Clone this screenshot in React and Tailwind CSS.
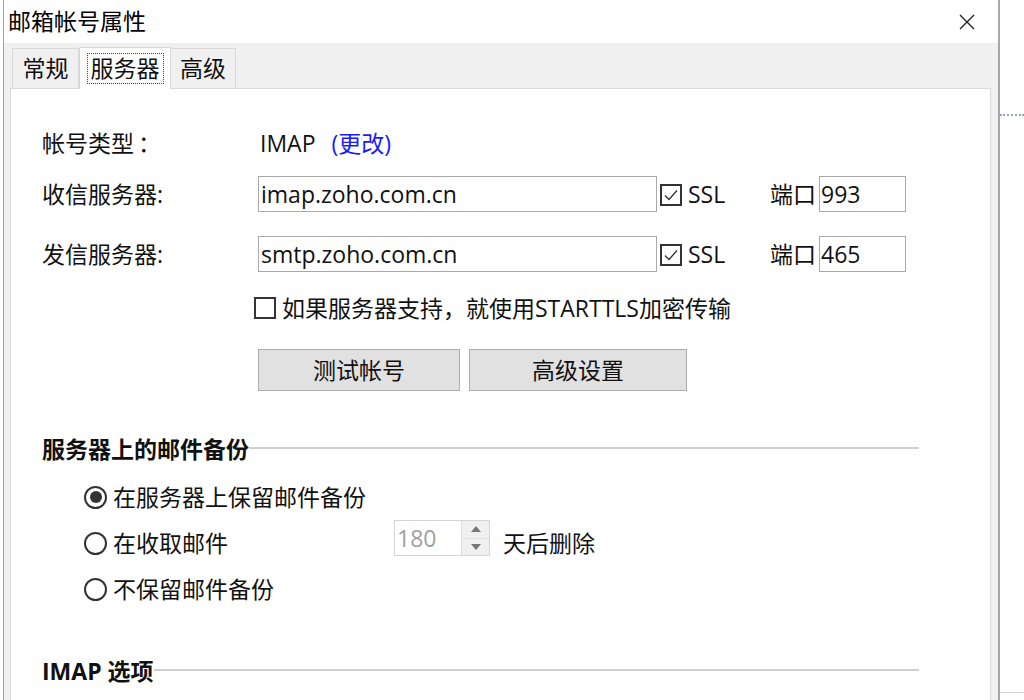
import React from 'react';

const font = { fontFamily: '"Open Sans", "Noto Sans CJK SC", sans-serif' };

function CheckBox({ checked }) {
  return (
    <span className="w-[22px] h-[22px] border-2 border-[#333] bg-white flex items-center justify-center shrink-0">
      {checked && (
        <svg width="16" height="16" viewBox="0 0 16 16">
          <path d="M2 8.5 L6 12.5 L14 3.5" fill="none" stroke="#333" strokeWidth="1.3" />
        </svg>
      )}
    </span>
  );
}

function Radio({ checked }) {
  return (
    <span className="w-[23px] h-[23px] rounded-full border-2 border-[#333] bg-white flex items-center justify-center shrink-0">
      {checked && <span className="w-[12px] h-[12px] rounded-full bg-[#333]" />}
    </span>
  );
}

function ServerRow({ label, host, port }) {
  return (
    <div className="flex items-center h-[36px]">
      <div className="w-[216px] text-[23px] text-[#111]">{label}</div>
      <div className="w-[399px] h-[36px] border border-[#a9a9a9] flex items-center pl-[2px] text-[23px] text-[#111]">{host}</div>
      <div className="ml-[3px] mt-[2px]"><CheckBox checked /></div>
      <span className="ml-[6px] w-[82px] text-[23px] text-[#111]">SSL</span>
      <span className="w-[49px] text-[23px] text-[#111]">端口</span>
      <div className="w-[87px] h-[36px] border border-[#a9a9a9] flex items-center pl-[1px] text-[23px] text-[#111]">{port}</div>
    </div>
  );
}

function SectionTitle({ children }) {
  return (
    <div className="flex items-center h-[28px] pr-[71px]">
      <span className="text-[23px] font-bold text-[#111] leading-none">{children}</span>
      <span className="flex-1 h-[2px] bg-[#d0d0d0] mt-[-3px]" />
    </div>
  );
}

export default function App() {
  return (
    <div className="w-[1024px] h-[700px] bg-white flex overflow-hidden" style={font}>
      <div className="ml-[3px] w-[997px] h-full border-l border-[#a0a0a0] border-r-2 border-r-[#a8a8a8] flex flex-col">
        {/* title bar */}
        <div className="h-[43px] bg-white flex items-center justify-between pl-[4px] pr-[22px] shrink-0">
          <span className="text-[23px] text-[#000]">邮箱帐号属性</span>
          <svg width="18" height="18" viewBox="0 0 18 18">
            <path d="M2 2 L16 16 M16 2 L2 16" stroke="#222" strokeWidth="1.4" />
          </svg>
        </div>
        {/* tab area */}
        <div className="flex-1 bg-[#f0f0f0] flex flex-col pl-[6px] pr-[7px]">
          <div className="flex items-end h-[45px] pl-[2px] relative z-10">
            <div className="w-[67px] h-[40px] border border-[#d9d9d9] border-b-0 bg-[#f0f0f0] flex items-center justify-center text-[23px] text-[#111]">常规</div>
            <div className="w-[92px] h-[42px] border border-[#d9d9d9] border-b-0 bg-white flex items-center justify-center mb-[-1px]">
              <span className="border border-dotted border-[#444] px-[3px] h-[31px] flex items-center text-[23px] text-[#111]">服务器</span>
            </div>
            <div className="w-[65px] h-[40px] border border-[#d9d9d9] border-b-0 border-l-0 bg-[#f0f0f0] flex items-center justify-center text-[23px] text-[#111]">高级</div>
          </div>
          <div className="flex-1 bg-white border border-[#d9d9d9] border-b-0 pl-[31px] flex flex-col">
            <div className="flex items-center h-[36px] mt-[36px]">
              <div className="w-[218px] text-[23px] text-[#111]">帐号类型<span className="ml-[4px]">：</span></div>
              <span className="text-[23px] text-[#111]">IMAP</span>
              <span className="ml-[16px] text-[23px] text-[#1a1aff]">(更改)</span>
            </div>
            <div className="mt-[15px]"><ServerRow label="收信服务器:" host="imap.zoho.com.cn" port="993" /></div>
            <div className="mt-[24px]"><ServerRow label="发信服务器:" host="smtp.zoho.com.cn" port="465" /></div>
            <div className="flex items-center h-[24px] mt-[24px] pl-[212px]">
              <CheckBox />
              <span className="ml-[6px] text-[23px] text-[#111]">如果服务器支持，就使用STARTTLS加密传输</span>
            </div>
            <div className="flex mt-[29px] pl-[216px] gap-[9px]">
              <button className="w-[202px] h-[42px] bg-[#e1e1e1] border border-[#adadad] text-[23px] text-[#111]">测试帐号</button>
              <button className="w-[218px] h-[42px] bg-[#e1e1e1] border border-[#adadad] text-[23px] text-[#111]">高级设置</button>
            </div>
            <div className="mt-[44px]"><SectionTitle>服务器上的邮件备份</SectionTitle></div>
            <div className="flex flex-col pl-[42px] mt-[11px]">
              <div className="flex items-center h-[46px]">
                <Radio checked />
                <span className="ml-[6px] text-[23px] text-[#111]">在服务器上保留邮件备份</span>
              </div>
              <div className="flex items-center h-[46px]">
                <Radio />
                <span className="ml-[6px] w-[281px] text-[23px] text-[#111]">在收取邮件</span>
                <div className="w-[96px] h-[36px] border border-[#d4d4d4] flex mt-[-10px]">
                  <span className="flex-1 flex items-center pl-[2px] text-[23px] text-[#a0a0a0]">180</span>
                  <div className="w-[28px] flex flex-col bg-[#f0f0f0] border-l border-[#e0e0e0]">
                    <div className="flex-1 flex items-center justify-center border-b border-[#e0e0e0]">
                      <svg width="10" height="6" viewBox="0 0 10 6"><path d="M0 6 L5 0 L10 6 Z" fill="#777" /></svg>
                    </div>
                    <div className="flex-1 flex items-center justify-center">
                      <svg width="10" height="6" viewBox="0 0 10 6"><path d="M0 0 L5 6 L10 0 Z" fill="#777" /></svg>
                    </div>
                  </div>
                </div>
                <span className="ml-[13px] text-[23px] text-[#111]">天后删除</span>
              </div>
              <div className="flex items-center h-[46px]">
                <Radio />
                <span className="ml-[6px] text-[23px] text-[#111]">不保留邮件备份</span>
              </div>
            </div>
            <div className="mt-[45px]"><SectionTitle>IMAP 选项</SectionTitle></div>
          </div>
        </div>
      </div>
      <div className="flex-1 flex flex-col">
        <div className="mt-[114px] border-t-2 border-dotted border-[#9aa3b5]" />
        <div className="mt-[576px] border-t border-[#d0d0d0]" />
      </div>
    </div>
  );
}
